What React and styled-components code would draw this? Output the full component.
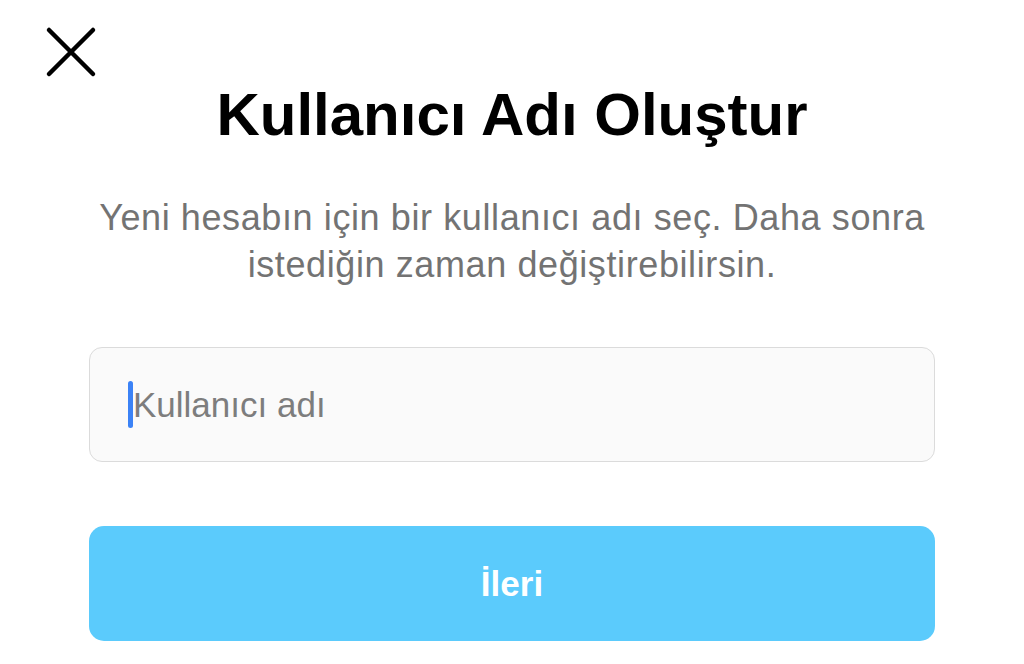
import styled, { createGlobalStyle } from "styled-components";

const GlobalStyle = createGlobalStyle`
  html, body {
    margin: 0;
    padding: 0;
    background: #ffffff;
  }
  body {
    font-family: "Liberation Sans", Arial, sans-serif;
  }
`;

const Screen = styled.div`
  width: 1024px;
  height: 664px;
  box-sizing: border-box;
  padding: 26px 89px 0;
  display: flex;
  flex-direction: column;
  align-items: stretch;
  background: #ffffff;
  overflow: hidden;
`;

const TopBar = styled.div`
  height: 52px;
  margin-left: -44px;
  display: flex;
  align-items: center;
`;

const CloseButton = styled.button`
  width: 52px;
  height: 52px;
  padding: 0;
  border: none;
  background: none;
  display: flex;
  align-items: center;
  justify-content: center;
  cursor: pointer;
`;

const Title = styled.h1`
  margin: 1px 0 0;
  font-family: "Liberation Sans", Arial, sans-serif;
  font-size: 60px;
  font-weight: 700;
  line-height: 72px;
  color: #000000;
  text-align: center;
`;

const Subtitle = styled.p`
  margin: 43px 0 0;
  font-family: "Liberation Sans", Arial, sans-serif;
  font-size: 36px;
  line-height: 47px;
  letter-spacing: 0.6px;
  color: #737373;
  text-align: center;
`;

const Field = styled.label`
  margin-top: 59px;
  height: 115px;
  box-sizing: border-box;
  border: 1.5px solid #dbdbdb;
  border-radius: 13px;
  background: #fafafa;
  display: flex;
  align-items: center;
  padding-left: 38px;
`;

const Caret = styled.span`
  width: 5px;
  height: 47px;
  border-radius: 3px;
  background: #3b82f6;
  flex-shrink: 0;
`;

const Placeholder = styled.span`
  font-family: "Liberation Sans", Arial, sans-serif;
  font-size: 35px;
  color: #7d7d7d;
`;

const NextButton = styled.button`
  margin-top: 64px;
  height: 115px;
  border: none;
  border-radius: 15px;
  background: #5bcbfc;
  color: #ffffff;
  font-family: "Liberation Sans", Arial, sans-serif;
  font-size: 35px;
  font-weight: 700;
  display: flex;
  align-items: center;
  justify-content: center;
`;

const CloseIcon = () => (
  <svg width="52" height="52" viewBox="0 0 52 52">
    <path
      d="M4 4 L48 48 M48 4 L4 48"
      stroke="#000000"
      strokeWidth="4.5"
      strokeLinecap="round"
    />
  </svg>
);

const App = () => {
  return (
    <>
      <GlobalStyle />
      <Screen>
        <TopBar>
          <CloseButton aria-label="Kapat">
            <CloseIcon />
          </CloseButton>
        </TopBar>
        <Title>Kullanıcı Adı Oluştur</Title>
        <Subtitle>
          Yeni hesabın için bir kullanıcı adı seç. Daha sonra
          <br />
          istediğin zaman değiştirebilirsin.
        </Subtitle>
        <Field>
          <Caret />
          <Placeholder>Kullanıcı adı</Placeholder>
        </Field>
        <NextButton>İleri</NextButton>
      </Screen>
    </>
  );
};

export default App;
